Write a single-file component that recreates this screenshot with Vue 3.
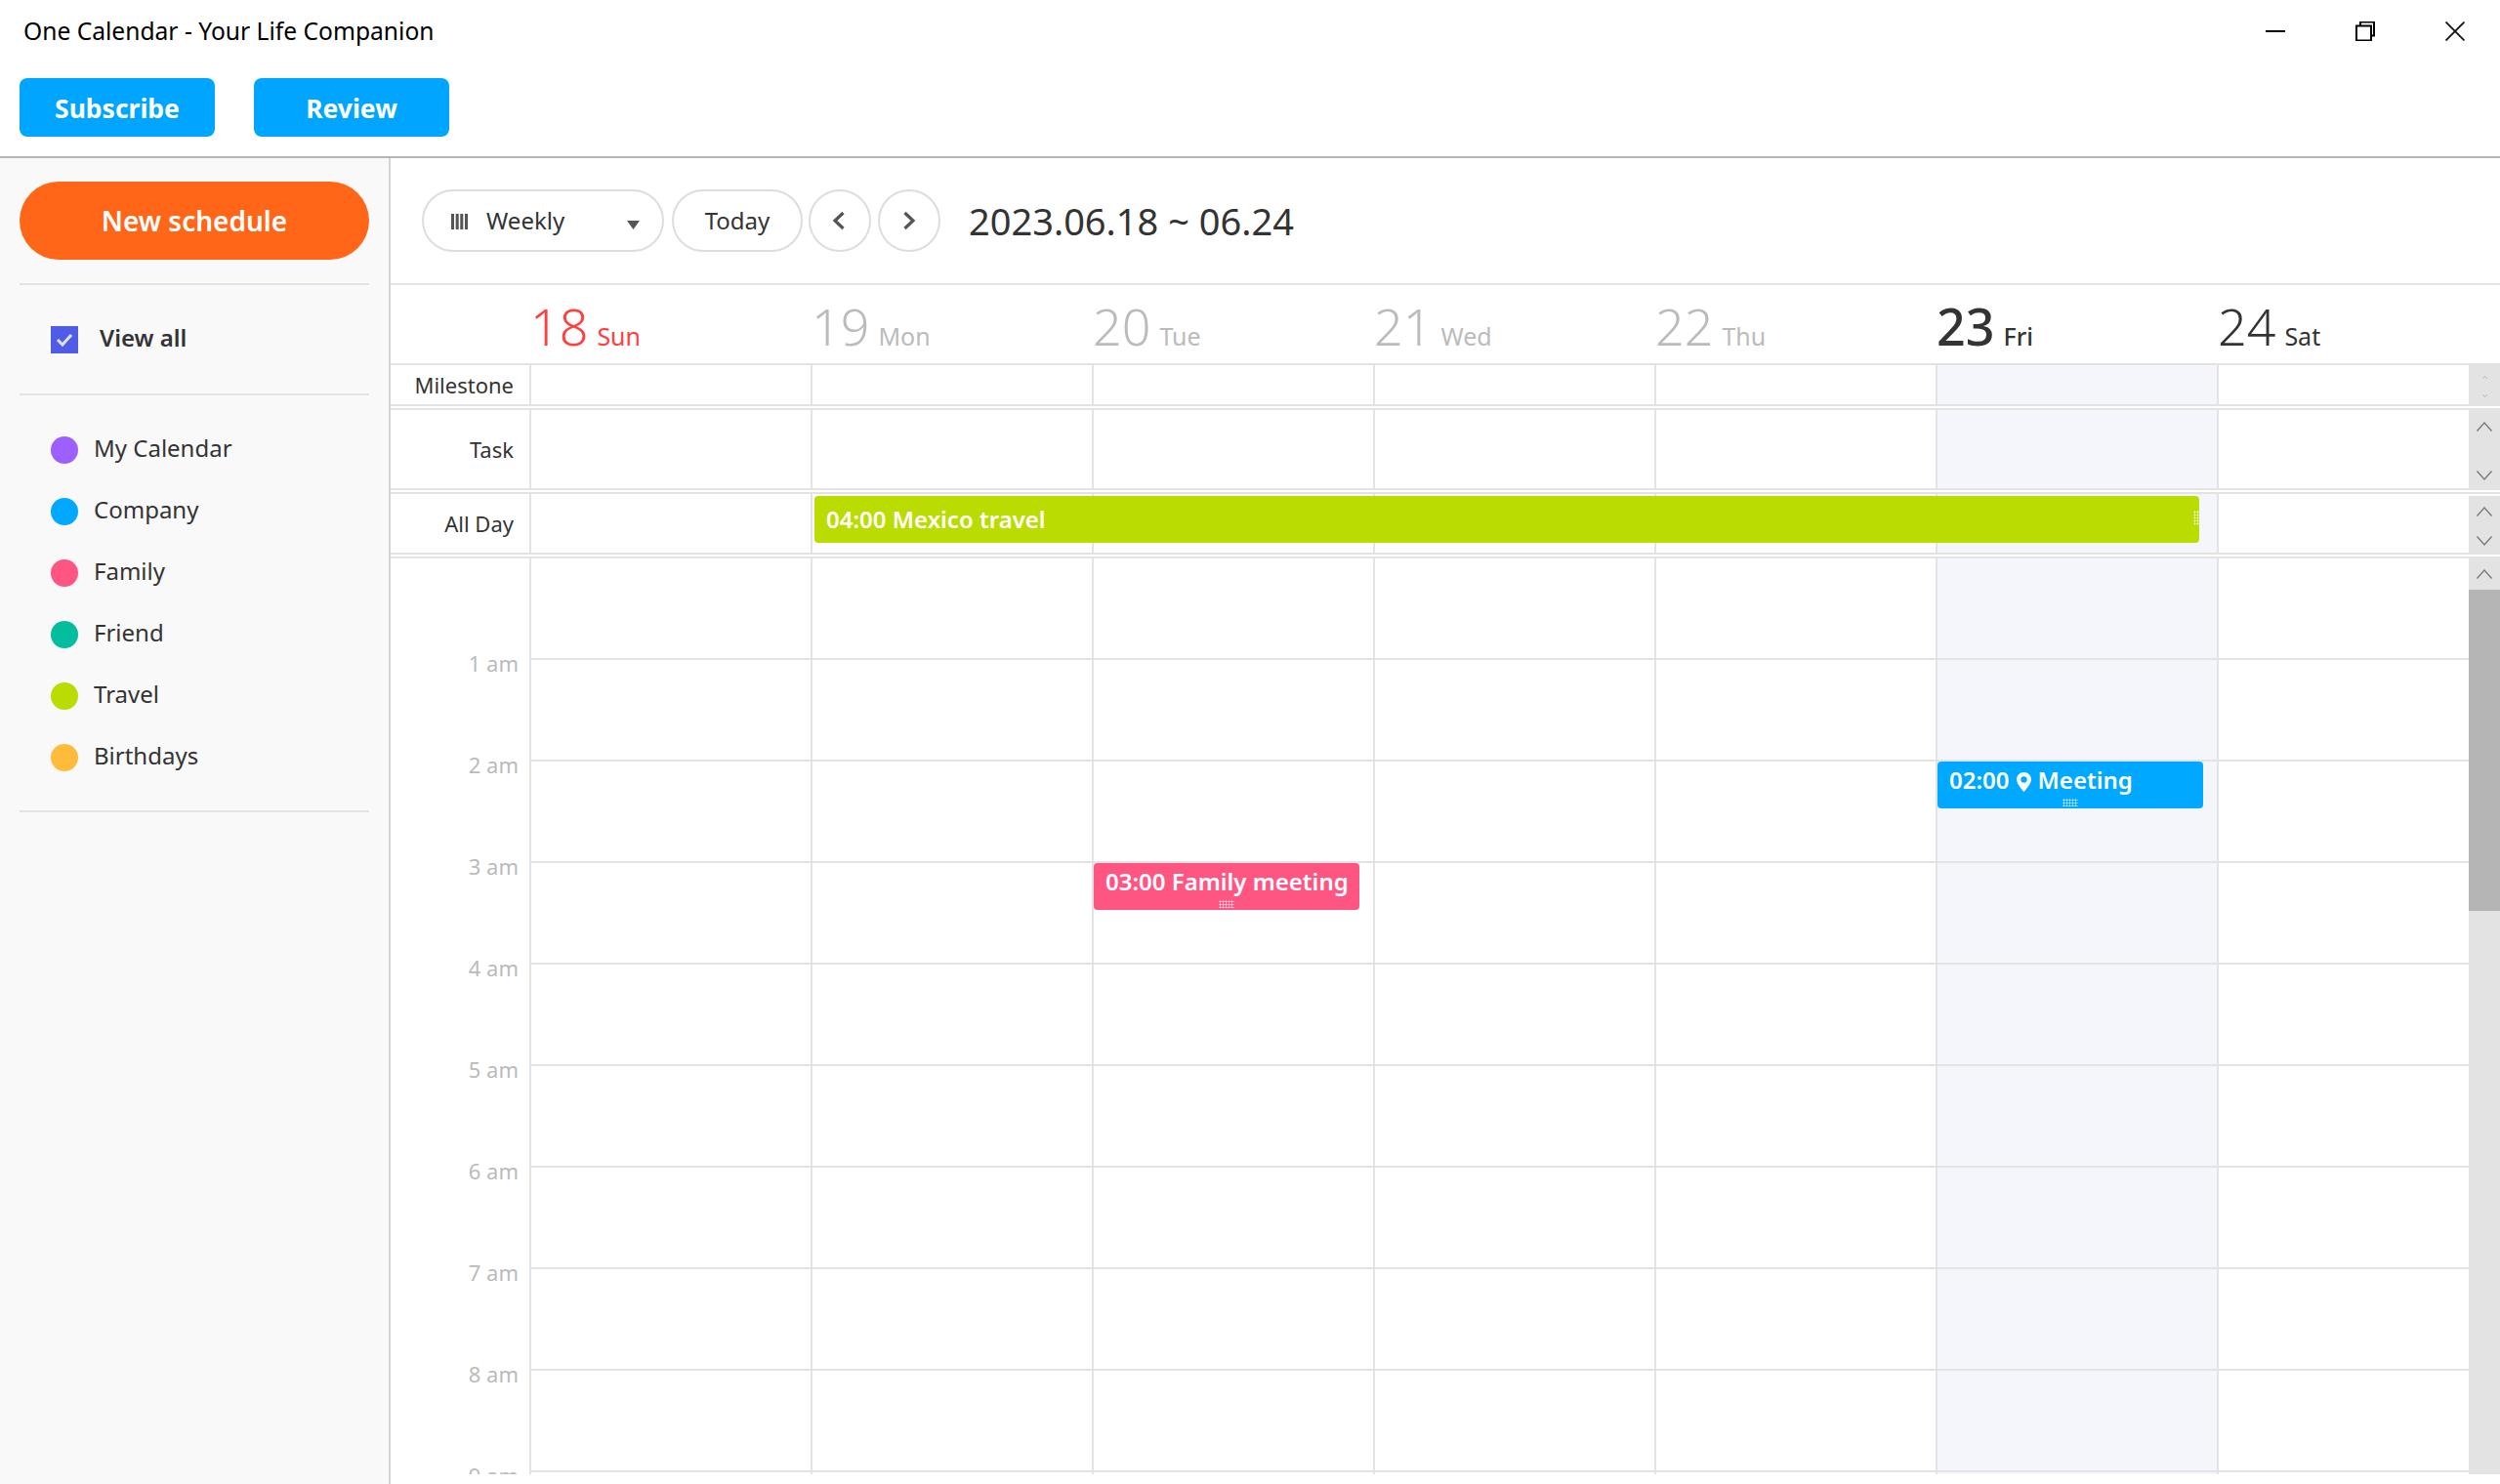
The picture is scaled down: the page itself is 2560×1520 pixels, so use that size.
<script setup>
const calendars = [
  { name: 'My Calendar', color: '#9e5fff' },
  { name: 'Company', color: '#00a9ff' },
  { name: 'Family', color: '#ff5583' },
  { name: 'Friend', color: '#03bd9e' },
  { name: 'Travel', color: '#bbdc00' },
  { name: 'Birthdays', color: '#ffbb3b' },
]
const days = [
  { num: 18, name: 'Sun', cls: 'sun' },
  { num: 19, name: 'Mon', cls: 'past' },
  { num: 20, name: 'Tue', cls: 'past' },
  { num: 21, name: 'Wed', cls: 'past' },
  { num: 22, name: 'Thu', cls: 'past' },
  { num: 23, name: 'Fri', cls: 'today' },
  { num: 24, name: 'Sat', cls: '' },
]
const hours = ['1 am', '2 am', '3 am', '4 am', '5 am', '6 am', '7 am', '8 am', '9 am']
const rows = [
  { label: 'Milestone', cls: 'milestone' },
  { label: 'Task', cls: 'task' },
  { label: 'All Day', cls: 'allday' },
]
</script>

<template>
  <div class="app">
    <header class="head">
      <div class="titlebar">
        <span class="title">One Calendar - Your Life Companion</span>
        <div class="winctl">
          <svg width="20" height="20" viewBox="0 0 20 20"><path d="M0 10h20" stroke="#000" stroke-width="2" fill="none" /></svg>
          <svg width="20" height="20" viewBox="0 0 20 20"><path d="M1 5h15v15H1zM5 5V1h14v14h-3" transform="translate(0 -.5)" stroke="#000" stroke-width="2" fill="none" /></svg>
          <svg width="20" height="20" viewBox="0 0 20 20"><path d="M.5.5l19 19M19.500.5l-19 19" stroke="#111" stroke-width="1.800" fill="none" /></svg>
        </div>
      </div>
      <div class="actions">
        <button class="cta"><span>Subscribe</span></button>
        <button class="cta"><span>Review</span></button>
      </div>
    </header>

    <main class="main">
      <aside class="side">
        <button class="newbtn">New schedule</button>
        <div class="viewall">
          <span class="check">
            <svg width="18" height="16" viewBox="0 0 18 16"><path d="M2 8l5 5 9-10" stroke="#dfe1fb" stroke-width="3" fill="none" /></svg>
          </span>
          <span class="lift">View all</span>
        </div>
        <ul class="callist">
          <li v-for="c in calendars" :key="c.name">
            <i class="dot" :style="{ background: c.color }"></i><span class="lift">{{ c.name }}</span>
          </li>
        </ul>
      </aside>

      <section class="cal">
        <div class="menu">
          <div class="pill weekly">
            <svg class="bars" width="17" height="16" viewBox="0 0 17 16"><path d="M1.500 0v16M6.200 0v16M10.800 0v16M15.500 0v16" stroke="#555" stroke-width="3" fill="none" /></svg>
            <span class="lift1">Weekly</span>
            <svg class="caret" width="13" height="9" viewBox="0 0 13 9"><path d="M0 0h13L6.500 9z" fill="#555" /></svg>
          </div>
          <div class="pill today-btn"><span class="lift1">Today</span></div>
          <div class="pill round">
            <svg class="prev" width="14" height="20" viewBox="0 0 14 20"><path d="M11.500 2L3 10l8.500 8" stroke="#555" stroke-width="3.200" fill="none" /></svg>
          </div>
          <div class="pill round">
            <svg width="14" height="20" viewBox="0 0 14 20"><path d="M2.500 2L11 10l-8.500 8" stroke="#555" stroke-width="3.200" fill="none" /></svg>
          </div>
          <span class="range">2023.06.18 ~ 06.24</span>
        </div>

        <div class="dayhead">
          <div></div>
          <div v-for="d in days" :key="d.num" class="dayname" :class="d.cls">
            <span class="num">{{ d.num }}</span><span class="wd">{{ d.name }}</span>
          </div>
        </div>

        <div v-for="r in rows" :key="r.label" class="panel" :class="r.cls">
          <div class="plabel">{{ r.label }}</div>
          <div v-for="d in days" :key="d.num" class="pcell" :class="{ tcol: d.cls === 'today' }"></div>
          <div class="gutter">
            <svg class="chev" viewBox="0 0 16 10"><path d="M.5 9.500L8 1l7.500 8.500" /></svg>
            <svg class="chev" viewBox="0 0 16 10"><path d="M.5.500L8 9l7.500-8.500" /></svg>
          </div>
          <div v-if="r.cls === 'allday'" class="ev ev-travel">
            04:00 Mexico travel
            <i class="grip-v"></i>
          </div>
        </div>

        <div class="grid">
          <div class="hours">
            <div v-for="h in hours" :key="h" class="hour">{{ h }}</div>
          </div>
          <div v-for="d in days" :key="d.num" class="col" :class="{ tcol: d.cls === 'today' }">
            <div v-for="h in hours" :key="h" class="slot"></div>
            <div v-if="d.name === 'Tue'" class="ev ev-timed ev-family">
              03:00 Family meeting
              <i class="grip-h"></i>
            </div>
            <div v-if="d.name === 'Fri'" class="ev ev-timed ev-meeting">
              02:00<svg class="pin" width="15" height="20" viewBox="0 0 15 20"><path fill-rule="evenodd" d="M7.500 0C3.400 0 0 3.300 0 7.400 0 12 7.500 20 7.500 20S15 12 15 7.400C15 3.300 11.600 0 7.500 0zm0 4.300a3.200 3.200 0 1 1 0 6.400 3.200 3.200 0 0 1 0-6.400z" fill="#fff" /></svg>Meeting
              <i class="grip-h"></i>
            </div>
          </div>
          <div class="gutter maingutter">
            <div class="sbtn"><svg class="chev" viewBox="0 0 16 10"><path d="M.5 9.500L8 1l7.500 8.500" /></svg></div>
            <div class="thumb"></div>
            <div class="track"><svg class="chev" viewBox="0 0 16 10"><path d="M.5.500L8 9l7.500-8.500" /></svg></div>
          </div>
        </div>
      </section>
    </main>
  </div>
</template>

<style>
html, body { margin: 0; background: #fff; }
</style>

<style scoped>
.app {
  width: 2560px;
  height: 1520px;
  overflow: hidden;
  display: flex;
  flex-direction: column;
  font-family: "Noto Sans", "Open Sans", sans-serif;
  font-size: 24px;
  color: #333;
}
.head { height: 160px; border-bottom: 2px solid #b5b5b5; flex: none; }
.titlebar { height: 64px; display: flex; justify-content: space-between; align-items: center; padding: 0 36px 0 24px; }
.title { color: #000; font-size: 24.600px; margin-top: -1px; }
.winctl { display: flex; gap: 72px; }
.winctl svg { display: block; }
.actions { display: flex; gap: 40px; padding: 16px 20px 0; }
.cta {
  width: 200px; height: 60px; border: 0; border-radius: 8px; background: #00a5ff; color: #fff;
  font: 700 26.500px "Noto Sans", sans-serif; padding: 2px 0 0;
}
.main { flex: 1; display: flex; min-height: 0; }
.side { width: 398px; flex: none; box-sizing: content-box; border-right: 2px solid #d4d4d4; background: #f9f9f9; padding: 0; display: flex; flex-direction: column; }
.newbtn {
  margin: 24px 20px; width: 358px; height: 80px; border: 0; border-radius: 40px; background: #ff6618; color: #fff;
  font: 600 28px "Noto Sans", sans-serif; padding: 0; flex: none;
}
.viewall {
  margin: 0 20px; border-top: 2px solid #e3e3e3; border-bottom: 2px solid #e3e3e3; height: 111px;
  display: flex; align-items: center; padding-left: 32px; gap: 22px; font-weight: 600; flex: none;
}
.lift { position: relative; top: -2px; }
.lift1 { position: relative; top: -1px; }
.check { width: 28px; height: 28px; background: #515ce6; display: flex; align-items: center; justify-content: center; }
.callist { list-style: none; margin: 0 20px; padding: 24px 0 23px 32px; border-bottom: 2px solid #e3e3e3; }
.callist li { height: 63px; display: flex; align-items: center; gap: 16px; }
.dot { width: 28px; height: 28px; border-radius: 50%; flex: none; }
.cal { flex: 1; min-width: 0; display: flex; flex-direction: column; }
.menu { height: 128px; flex: none; border-bottom: 2px solid #e3e3e3; display: flex; align-items: center; padding-left: 32px; gap: 6px; box-sizing: content-box; }
.pill { height: 60px; border: 2px solid #ddd; border-radius: 32px; display: flex; align-items: center; box-sizing: content-box; }
.weekly { width: 244px; position: relative; margin-right: 2px; }
.bars { margin-left: 28px; margin-right: 19px; position: relative; top: 1px; }
.caret { position: absolute; right: 23px; top: 30px; }
.today-btn { width: 130px; justify-content: center; }
.round { width: 60px; justify-content: center; }
.round + .round { margin-left: 1px; }
.prev { margin-right: 2px; }
.range { margin-left: 23px; font-size: 38px; }
.dayhead {
  display: grid; grid-template-columns: 144px repeat(7, 288px); height: 80px; border-bottom: 2px solid #e3e3e3; flex: none;
}
.dayname { display: flex; align-items: baseline; padding-top: 6px; margin-left: -1px; }
.num { font-size: 52px; font-weight: 350; line-height: 72px; margin-right: 9px; }
.wd { font-size: 25px; }
.sun { color: #ff4040; }
.past { color: #bbb; }
.today .num { font-weight: 500; }
.today .wd { font-weight: 500; }
.panel { display: grid; grid-template-columns: 144px repeat(6, 288px) 256px 32px; flex: none; position: relative; box-sizing: border-box; }
.milestone { height: 42px; }
.task { height: 84px; margin-top: 2px; border-top: 2px solid #e3e3e3; }
.allday { height: 64px; margin-top: 2px; border-top: 2px solid #e3e3e3; }
.plabel {
  font-size: 22px; text-align: right; padding-right: 16px; border-right: 2px solid #e3e3e3; border-bottom: 2px solid #e3e3e3;
  display: flex; align-items: center; justify-content: flex-end;
}
.pcell { border-right: 2px solid #e3e3e3; border-bottom: 2px solid #e3e3e3; }
.pcell:nth-child(8) { border-right: 0; }
.tcol { background: #f5f6fc; }
.gutter { background: #e3e3e3; display: flex; flex-direction: column; align-items: center; justify-content: space-between; }
.chev { width: 16px; height: 10px; display: block; fill: none; stroke: #777; stroke-width: 1.300; }
.milestone .gutter { padding: 11px 0 9px; }
.milestone .chev { width: 5px; height: 3px; }
.task .gutter { padding: 12px 0 10px; }
.allday .gutter { padding: 11px 0 9px; margin-top: 2px; }
.grid {
  flex: none; margin-top: 2px; border-top: 2px solid #e3e3e3; box-sizing: border-box; height: 940px;
  display: grid; grid-template-columns: 144px repeat(6, 288px) 256px 32px; overflow: hidden;
}
.hours { border-right: 2px solid #e3e3e3; padding-top: 96px; }
.hour { height: 104px; line-height: 22px; font-size: 22px; color: #bbb; text-align: right; padding-right: 11px; }
.col { border-right: 2px solid #e3e3e3; position: relative; }
.col:nth-child(8) { border-right: 0; }
.slot { height: 102px; border-bottom: 2px solid #e3e3e3; }
.maingutter { justify-content: flex-start; align-items: stretch; }
.sbtn { height: 32px; flex: none; display: flex; justify-content: center; padding-top: 11px; box-sizing: border-box; }
.thumb { height: 329px; background: #b5b5b5; flex: none; }
.track { flex: 1; display: flex; justify-content: center; align-items: flex-end; padding-bottom: 12px; }
.ev { position: absolute; height: 48px; border-radius: 4px; color: #fff; font-weight: 600; font-size: 24px; line-height: 38px; padding-left: 12px; box-sizing: border-box; white-space: nowrap; }
.ev-travel { left: 434px; top: 2px; width: 1418px; background: #bbdc00; line-height: 48px; }
.ev-timed { left: 0; width: 272px; }
.ev-family { top: 312px; background: #ff5583; }
.ev-meeting { top: 208px; background: #00a9ff; }
.pin { vertical-align: -3px; margin: 0 7px; }
.grip-h {
  position: absolute; left: 128px; bottom: 2px; width: 16px; height: 8px;
  background-image: radial-gradient(rgba(255,255,255,.8) 45%, transparent 50%); background-size: 3px 3px;
}
.grip-v {
  position: absolute; right: 0; top: 15px; width: 6px; height: 15px;
  background-image: radial-gradient(rgba(255,255,255,.8) 45%, transparent 50%); background-size: 3px 3px;
}
</style>
